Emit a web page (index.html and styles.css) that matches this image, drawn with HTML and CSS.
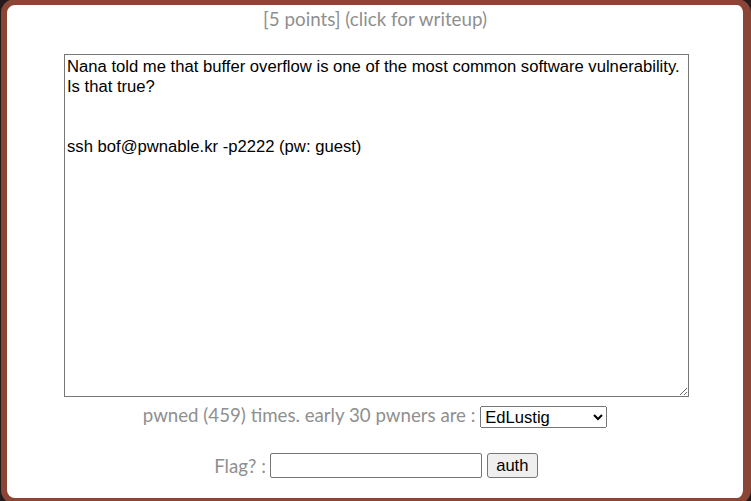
FILE: index.html
```html
<!DOCTYPE html>
<html>
<head>
<meta charset="utf-8">
<link rel="stylesheet" href="styles.css">
</head>
<body>
<div class="panel">
  <div class="title">[5 points] (click for writeup)</div>
  <textarea class="desc" readonly>Nana told me that buffer overflow is one of the most common software vulnerability. 
Is that true?


ssh bof@pwnable.kr -p2222 (pw: guest)</textarea>
  <div class="pwned">pwned (459) times. early 30 pwners are : <select class="pwners"><option>EdLustig</option></select></div>
  <form class="flag">
    <span class="flag-label">Flag? :</span>
    <input class="flag-input" type="text">
    <button class="auth" type="button">auth</button>
  </form>
</div>
</body>
</html>
```
FILE: styles.css
```css
html, body {
  margin: 0;
  padding: 0;
  height: 100%;
  background: #231a1e;
  overflow: hidden;
}
.panel {
  margin: -1px 0 0 1px;
  width: 736px;
  height: 493px;
  background: #ffffff;
  border: 6px solid #8a4535;
  border-right-width: 8px;
  border-radius: 14px;
  font-family: Lato, "Open Sans", sans-serif;
  color: #8f8f8f;
  text-align: center;
}
.title {
  font-size: 18.8px;
  line-height: 22px;
  padding-top: 3px;
}
.desc {
  display: block;
  box-sizing: border-box;
  width: 625px;
  height: 343px;
  margin: 24px 0 0 57px;
  padding: 2px 2px 2px 2px;
  border: 1px solid #767676;
  font-family: "Liberation Sans", Arial, sans-serif;
  font-size: 16.65px;
  line-height: 20px;
  color: #000;
  resize: both;
}
.pwned {
  margin-top: 7px;
  font-size: 18.7px;
  line-height: 22px;
}
.pwners {
  font-family: "Liberation Sans", Arial, sans-serif;
  font-size: 16.6px;
  width: 127px;
  height: 22px;
  vertical-align: middle;
  color: #000;
}
.flag {
  margin-top: 25px;
  display: flex;
  justify-content: center;
  align-items: center;
  gap: 4px;
  padding-left: 2px;
}
.flag-label {
  font-size: 18.7px;
}
.flag-input {
  box-sizing: border-box;
  width: 212px;
  height: 25px;
  border: 1px solid #767676;
  border-radius: 2px;
}
.auth {
  box-sizing: border-box;
  width: 51px;
  height: 25px;
  margin-left: 1px;
  font-family: "Liberation Sans", Arial, sans-serif;
  font-size: 16.6px;
  color: #000;
  background: #efefef;
  border: 1px solid #767676;
  border-radius: 3px;
  padding: 0;
}
```
